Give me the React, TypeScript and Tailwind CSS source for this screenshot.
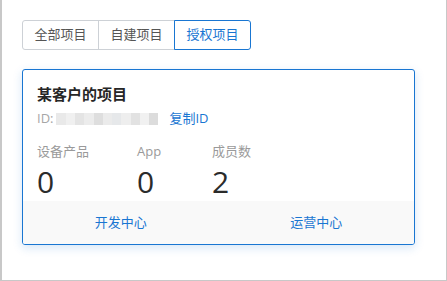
import React from "react";

const tabs = ["全部项目", "自建项目", "授权项目"];

const stats = [
  { label: "设备产品", value: "0", width: "w-[100px]" },
  { label: "App", value: "0", width: "w-[75px]" },
  { label: "成员数", value: "2", width: "w-[75px]" },
];

const blurCells = ["#e9e9e9", "#f0f0f0", "#e4e4e4", "#ececec", "#dedede", "#ebebeb", "#e6e8ea", "#eeeeee", "#e2e2e2", "#f1f1f1", "#dcdcdc"];

export default function App() {
  return (
    <div
      className="w-[447px] h-[281px] bg-white border-l-2 border-r border-b border-[#c8c8c8] pl-[20px] pr-[32px] pt-[20px]"
      style={{ fontFamily: '"Open Sans", "Noto Sans CJK SC", sans-serif' }}
    >
      {/* Tabs */}
      <div className="flex">
        {tabs.map((t, i) => (
          <div
            key={t}
            className={`w-[77px] h-[30px] flex items-center justify-center text-[13px] border ${
              i === 2
                ? "border-[#1976d2] text-[#1976d2] rounded-r-[3px] relative z-10 -ml-px"
                : i === 0
                ? "border-[#cdd1d6] text-[#555] rounded-l-[3px]"
                : "border-[#cdd1d6] text-[#555] -ml-px"
            }`}
          >
            {t}
          </div>
        ))}
      </div>

      {/* Card */}
      <div className="mt-[19px] w-[393px] border border-[#1976d2] rounded-[3px] bg-white shadow-[0_3px_10px_rgba(25,118,210,0.18)] overflow-hidden">
        <div className="pt-[13px] px-[14px] h-[131px]">
          <div className="text-[15px] leading-[22px] font-semibold text-[#262626]">某客户的项目</div>
          <div className="mt-[4px] flex items-center h-[20px] text-[13px] text-[#a6a6a6]">
            <span>ID:</span>
            <div className="ml-[3px] flex h-[12px] w-[102px] blur-[0.6px]">
              {blurCells.map((c, i) => (
                <div key={i} className="flex-1" style={{ backgroundColor: c }} />
              ))}
            </div>
            <span className="ml-[11px] text-[#1976d2]">复制ID</span>
          </div>
          <div className="mt-[12px] flex">
            {stats.map((s) => (
              <div key={s.label} className={s.width}>
                <div className="text-[13px] leading-[20px] text-[#9a9a9a]">{s.label}</div>
                <div className="mt-[3px] text-[30px] leading-[36px] text-[#2b2b2b]">{s.value}</div>
              </div>
            ))}
          </div>
        </div>
        <div className="h-[43px] bg-[#f9f9f9] flex text-[13px] text-[#1976d2]">
          <div className="flex-1 flex items-center justify-center">开发中心</div>
          <div className="flex-1 flex items-center justify-center">运营中心</div>
        </div>
      </div>
    </div>
  );
}
